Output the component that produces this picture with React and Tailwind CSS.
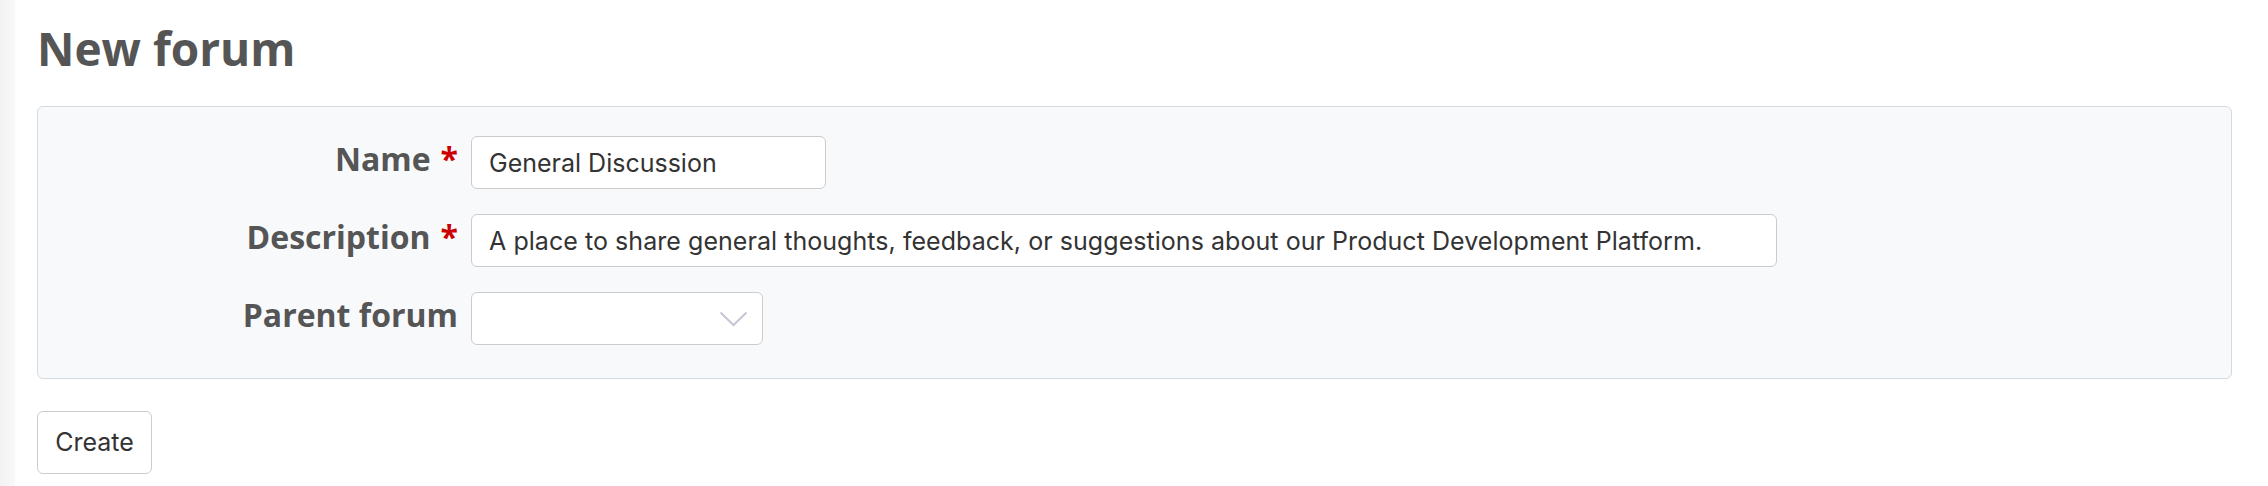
import React from "react";

const labelCls =
  "flex items-center justify-end gap-[10px] pb-[7px] text-[32px] font-bold text-[#555555] leading-none";

const Required = () => <span className="text-[#cc0000]">*</span>;

const App = () => {
  return (
    <div className="flex min-h-[486px] bg-white" style={{ fontFamily: "'Open Sans', sans-serif" }}>
      <div className="w-[15px] shrink-0 bg-gradient-to-r from-[#f2f2f2] to-[#f9f9f9]" />
      <div className="flex-1 pt-[25px] pl-[22px] pr-[36px]">
        <h1 className="text-[46px] font-bold leading-[46px] text-[#555555] mb-[35px]">New forum</h1>

        <form className="rounded-[6px] border border-[#d5dae1] bg-[#f8f9fb] pt-[29px] pb-[33px]">
          <div className="grid grid-cols-[420px_1fr] gap-x-[13px] gap-y-[25px]">
            <label className={labelCls}>
              Name <Required />
            </label>
            <input
              type="text"
              defaultValue="General Discussion"
              className="h-[53px] w-[355px] rounded-[6px] border border-[#cccccc] bg-white px-[17px] text-[25px] text-[#333333] outline-none"
              style={{ fontFamily: "Inter, sans-serif" }}
            />

            <label className={labelCls}>
              Description <Required />
            </label>
            <input
              type="text"
              defaultValue="A place to share general thoughts, feedback, or suggestions about our Product Development Platform."
              className="h-[53px] w-[1306px] rounded-[6px] border border-[#cccccc] bg-white px-[17px] text-[25px] tracking-[0.05px] text-[#333333] outline-none"
              style={{ fontFamily: "Inter, sans-serif" }}
            />

            <label className={labelCls}>Parent forum</label>
            <div className="relative h-[53px] w-[292px] rounded-[6px] border border-[#cccccc] bg-white">
              <svg
                className="absolute right-[14px] top-[18px]"
                width="29"
                height="16"
                viewBox="0 0 29 16"
                fill="none"
              >
                <polyline points="1.5,1.5 14.5,14 27.5,1.5" stroke="#c6c6d6" strokeWidth="2" />
              </svg>
            </div>
          </div>
        </form>

        <button
          type="button"
          className="mt-[32px] h-[63px] w-[115px] rounded-[6px] border border-[#cccccc] bg-white text-[25px] text-[#333333]"
          style={{ fontFamily: "Inter, sans-serif" }}
        >
          Create
        </button>
      </div>
    </div>
  );
};

export default App;
